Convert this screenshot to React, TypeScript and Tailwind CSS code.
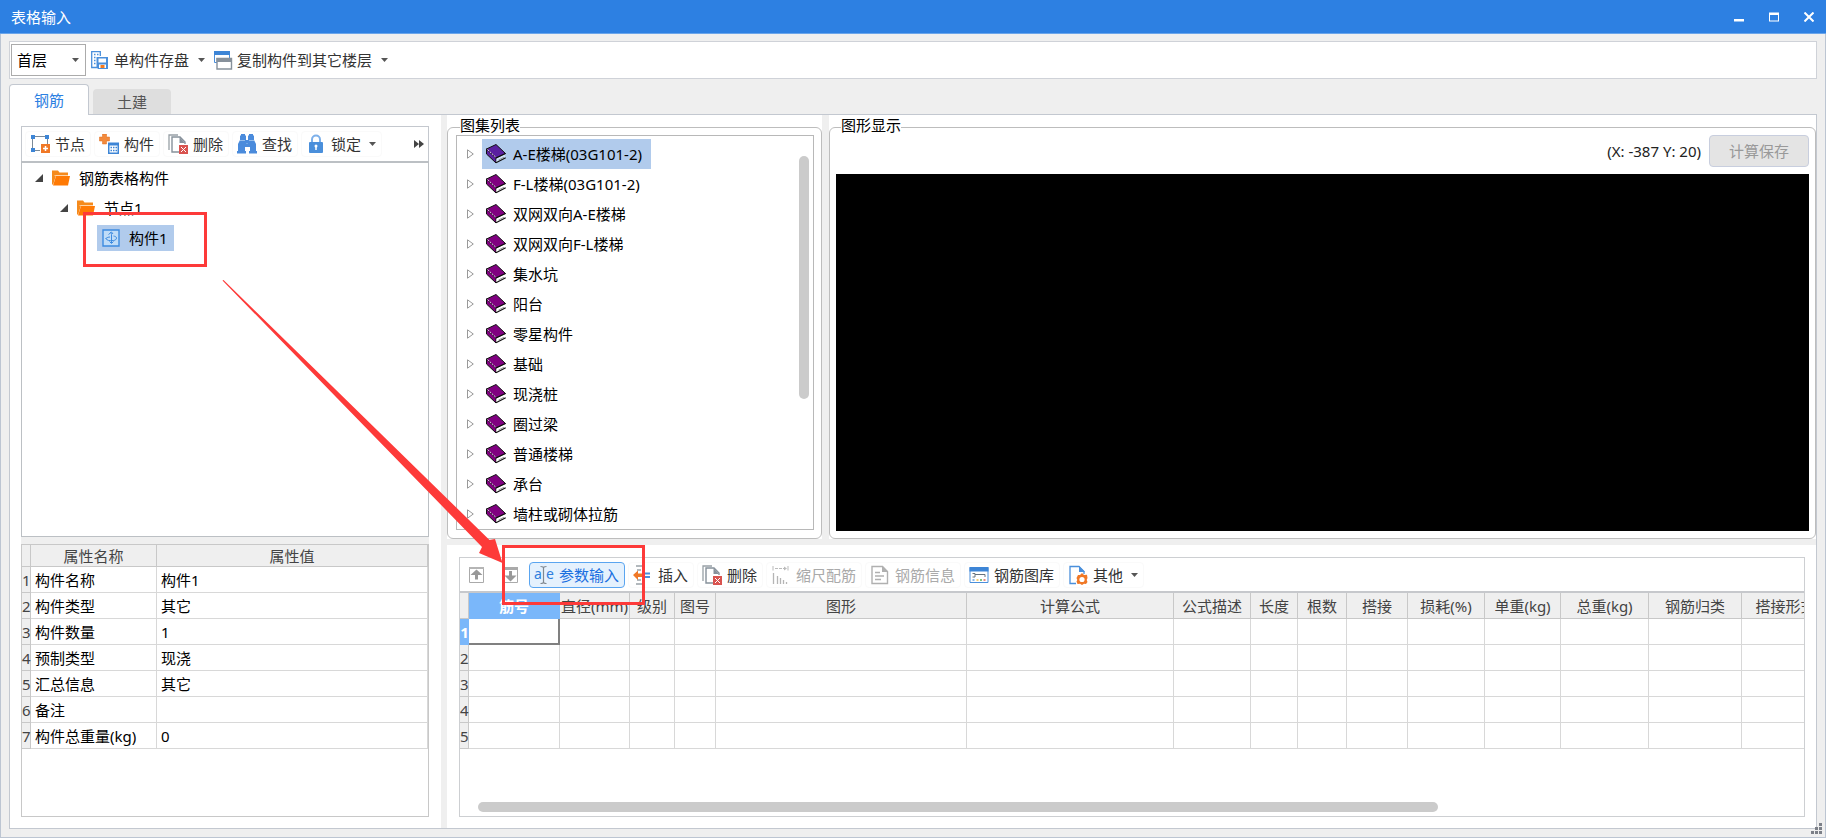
import { ReactNode, useState } from "react";

type IconProps = {
  children: ReactNode;
};

type ToolButtonProps = {
  icon: ReactNode;
  label: string;
  disabled?: boolean;
  active?: boolean;
  dropdown?: boolean;
};

const atlasItems = [
  "A-E楼梯(03G101-2)",
  "F-L楼梯(03G101-2)",
  "双网双向A-E楼梯",
  "双网双向F-L楼梯",
  "集水坑",
  "阳台",
  "零星构件",
  "基础",
  "现浇桩",
  "圈过梁",
  "普通楼梯",
  "承台",
  "墙柱或砌体拉筋",
];

const properties = [
  { name: "构件名称", value: "构件1" },
  { name: "构件类型", value: "其它" },
  { name: "构件数量", value: "1" },
  { name: "预制类型", value: "现浇" },
  { name: "汇总信息", value: "其它" },
  { name: "备注", value: "" },
  { name: "构件总重量(kg)", value: "0" },
];

const columns = [
  { title: "筋号", width: "w-[91px]" },
  { title: "直径(mm)", width: "w-[70px]" },
  { title: "级别", width: "w-[45px]" },
  { title: "图号", width: "w-[41px]" },
  { title: "图形", width: "w-[251px]" },
  { title: "计算公式", width: "w-[207px]" },
  { title: "公式描述", width: "w-[77px]" },
  { title: "长度", width: "w-[47px]" },
  { title: "根数", width: "w-[49px]" },
  { title: "搭接", width: "w-[61px]" },
  { title: "损耗(%)", width: "w-[77px]" },
  { title: "单重(kg)", width: "w-[76px]" },
  { title: "总重(kg)", width: "w-[88px]" },
  { title: "钢筋归类", width: "w-[93px]" },
  { title: "搭接形式", width: "w-[88px]" },
];

function Icon({ children }: IconProps) {
  return (
    <svg
      viewBox="0 0 20 20"
      className="w-5 h-5 shrink-0"
      fill="none"
      aria-hidden="true"
    >
      {children}
    </svg>
  );
}

function Caret() {
  return (
    <svg viewBox="0 0 7 4" className="w-[7px] h-1 shrink-0" aria-hidden="true">
      <path d="M0 0h7L3.5 4z" fill="#555" />
    </svg>
  );
}

const SaveUnitIcon = () => (
  <Icon>
    <path d="M7 17.500H1.700V1.700h8.600V6" stroke="#4a8fdb" strokeWidth="1.300" />
    <path
      d="M4 4.500h1.500M4 7.500h1.500M4 10.500h1.500M4 13.500h1.500M7 4.500h1.500"
      stroke="#4a8fdb"
      strokeWidth="1.300"
    />
    <path d="M6.500 7H18v12H8l-1.500-1.500z" fill="#4a8fdb" />
    <path d="M8.500 8.500h7.500v4H8.500z" fill="#fff" />
    <path d="M9 14.500h7V18H9z" fill="#fff" />
    <path d="M10.500 15h4v3h-4z" fill="#f47b20" />
  </Icon>
);

const CopyFloorIcon = () => (
  <Icon>
    <path d="M1.500 1.500h15v11h-15z" fill="#fff" stroke="#4a8fdb" />
    <path d="M1 1h16v4H1z" fill="#3d85d6" />
    <path
      d="M4 8.500h14.500v10.500H4z"
      fill="#fff"
      stroke="#87919b"
      strokeWidth="1.400"
    />
    <path d="M3.500 8h15.500v4H3.500z" fill="#87919b" />
  </Icon>
);

const NodeIcon = () => (
  <Icon>
    <path d="M3 2.500h13M2.500 3v13M17.500 4v6M4 16.500h6" stroke="#7b8a98" />
    <path d="M1 1h4v4H1zM15 1h4v4h-4zM1 14h4v4H1z" fill="#3d85d6" />
    <path d="M11 10h9v9h-9z" fill="#f07826" />
    <path d="M15.500 12v5M13 14.500h5" stroke="#fff" strokeWidth="1.500" />
  </Icon>
);

const MemberIcon = () => (
  <Icon>
    <path
      d="M3.500 0h4v3H10.500v4H7.500v3h-4V7H.500V3h3z"
      fill="#f28a3c"
      stroke="#e06a1a"
      strokeWidth=".5"
    />
    <path d="M9 8.500h11V20H9z" fill="#3d85d6" />
    <path d="M10.500 11.500h8v7h-8z" fill="#fff" />
    <path
      d="M11.500 13.500h1.500M14 13.500h1.500M16.500 13.500H18M11.500 16.500h1.500M14 16.500h1.500M16.500 16.500H18"
      stroke="#3d85d6"
      strokeWidth="1.500"
    />
  </Icon>
);

const DeleteIcon = () => (
  <Icon>
    <path d="M1 16V1h9" stroke="#98a0a6" strokeWidth="1.300" />
    <path
      d="M12 18H4V3h8l5 5v2"
      fill="#fff"
      stroke="#87919b"
      strokeWidth="1.400"
    />
    <path d="M11.500 3v6H17z" fill="#87919b" />
    <path d="M11 11h9v9h-9z" fill="#d9534f" />
    <path d="M13 13l5 5M18 13l-5 5" stroke="#fff" />
  </Icon>
);

const FindIcon = () => (
  <Icon>
    <path
      d="M4 1.500V0h4v1.500h1V6h2V1.500h1V0h4v1.500h1V6l2 4v7h1v2.500h-8V17h1v-4H8v4h1v2.500H0V17h1v-7l2-4V1.500z"
      fill="#4a8bdc"
    />
    <path d="M3 6.500h5M12 6.500h5M9.500 9.500h1" stroke="#a9cbf0" strokeWidth=".8" />
  </Icon>
);

const LockIcon = () => (
  <Icon>
    <path
      d="M6 9V5.500a4 4 0 0 1 8 0V9"
      stroke="#7db0ea"
      strokeWidth="2"
    />
    <rect x="3" y="8" width="14" height="11" rx="1" fill="#4a8fdb" />
    <circle cx="10" cy="12" r="1.500" fill="#fff" />
    <path d="M10 12v4" stroke="#fff" strokeWidth="1.500" />
  </Icon>
);

const ArrowUpIcon = () => (
  <Icon>
    <path d="M2.500 2.500h14v15h-14z" stroke="#aaa" />
    <path d="M2 2h15v2H2z" fill="#b5b5b5" />
    <path d="M9.500 4.500l6 5.500h-4.500v4.500H8V10H3.500z" fill="#999" />
  </Icon>
);

const ArrowDownIcon = () => (
  <Icon>
    <path d="M2.500 2.500h14v15h-14z" stroke="#aaa" />
    <path d="M2 2h15v3H2z" fill="#aaa" />
    <path d="M9.500 16.500l6-6H11V6H8v4.500H3.500z" fill="#999" />
  </Icon>
);

// letters on both sides of a text cursor
const ParamInputIcon = () => (
  <Icon>
    <text
      x="0"
      y="14"
      fontSize="14"
      fontFamily="Noto Sans, sans-serif"
      fill="#2f7fde"
    >
      a
    </text>
    <text
      x="12"
      y="14"
      fontSize="14"
      fontFamily="Noto Sans, sans-serif"
      fill="#2f7fde"
    >
      e
    </text>
    <path
      d="M6.500 1.500c2 0 3 .5 3 1.500 0-1 1-1.500 3-1.500M9.500 3v14M6.500 18.500c2 0 3-.5 3-1.500 0 1 1 1.500 3 1.500"
      stroke="#808890"
      strokeWidth="1.200"
    />
  </Icon>
);

const InsertIcon = () => (
  <Icon>
    <path d="M3 1h6M4 5h4M4 15h4M3 19h6" stroke="#9aa2a8" strokeWidth="1.300" />
    <path d="M10 8.500h7M10 12h7" stroke="#4a8fdb" strokeWidth="1.800" />
    <path d="M0 10l5-4.500v3h4v3.500H5v3z" fill="#f07826" />
  </Icon>
);

const ScaleIcon = () => (
  <Icon>
    <path d="M2 1v4.500M17 1v4.500" stroke="#bbb" />
    <path d="M4 3.500h10" stroke="#bbb" strokeDasharray="3 1" />
    <path d="M13 1.500l3 2-3 2z" fill="#bbb" />
    <path
      d="M2.500 8v11M6.500 11v8M9.500 13v6M12.500 15v4M15.500 17v2"
      stroke="#b5b5b5"
      strokeWidth="1.300"
    />
  </Icon>
);

const InfoIcon = () => (
  <Icon>
    <path d="M2 1.500h10.500l5 5v12H2z" stroke="#b0b0b0" strokeWidth="1.400" />
    <path d="M12 1v6h6z" fill="#b0b0b0" />
    <path d="M5 7.500h5M5 11h9M5 14.500h6" stroke="#b0b0b0" strokeWidth="1.300" />
  </Icon>
);

const LibraryIcon = () => (
  <Icon>
    <path d="M1 2.500h18v15H1z" fill="#fff" stroke="#4a8fdb" />
    <path d="M.5 2h19v4.500H.5z" fill="#3d85d6" />
    <path d="M3.500 8.500h2.500v3.500H3.500M6 9.500h10V12" stroke="#66727c" />
    <path d="M3.500 15h2" stroke="#4a8fdb" strokeWidth="1.300" />
    <path d="M7.500 15h2" stroke="#f0b020" strokeWidth="1.300" />
    <path d="M11 15h2" stroke="#54b154" strokeWidth="1.300" />
    <path d="M14.500 15h2" stroke="#e0453a" strokeWidth="1.300" />
  </Icon>
);

const OtherIcon = () => (
  <Icon>
    <path
      d="M8 18.500H2v-17h9l5 5V9"
      fill="#fff"
      stroke="#4a8fdb"
      strokeWidth="1.300"
    />
    <path d="M11 1v6h6z" fill="#4a8fdb" />
    <path
      d="M14 8l2 2 3-.3.500 3.300-.8 2 .8 2-1.500 2-2-.3-2 1.300-2-1.300-2.500.3-1-2.500.8-1.500-.8-2 1.500-3h2z"
      fill="#f07826"
    />
    <circle cx="14" cy="14.500" r="2.600" fill="#fff" />
  </Icon>
);

const FolderIcon = () => (
  <svg viewBox="0 0 18 16" className="w-[18px] h-4 shrink-0" aria-hidden="true">
    <path d="M0 14V.500h6l1.500 2H16v3H4L1 15z" fill="#f58a1c" />
    <path d="M4 6h14l-2 9.500H1z" fill="#ff7a05" />
    <path d="M2.500 5.500H16" stroke="#ffd9b0" strokeWidth=".8" />
  </svg>
);

const UnitIcon = () => (
  <svg
    viewBox="0 0 18 18"
    className="w-[18px] h-[18px] shrink-0"
    fill="none"
    stroke="#3d8be0"
    aria-hidden="true"
  >
    <path d="M1 1h16v16H1z" fill="#bfdcf8" strokeWidth="1.400" />
    <path d="M9.500 14V5.500c0-1.500-.5-2-1.500-2M6.500 5.500L9.500 3l1.500 2M4 9.500c1-1 2.500-1.500 4-1.500M3.500 9c1 2.500 4 3 8 2.500 2-.3 3-1.200 3-2.500s-1.500-1.700-3-2M7.500 12.500l2 2 2-2" />
  </svg>
);

const BookIcon = ({ selected }: { selected: boolean }) => (
  <Icon>
    <path
      d="M.500 5L10 .500 19.500 9.500 10 14z"
      fill={selected ? "#5a1fa0" : "#800080"}
      stroke="#101010"
    />
    <path
      d="M.500 5v5l9.500 9V14z"
      fill={selected ? "#5a1fa0" : "#800080"}
      stroke="#101010"
    />
    <path
      d="M10.500 14.500l9-4.500-.8 2 .8 1.500-9 5z"
      fill={selected ? "#cfe3f7" : "#fff"}
    />
    <path d="M10 14l9.500-4.500M10 18.800l9.700-5" stroke="#101010" strokeWidth="1.200" />
    <path d="M12.500 16l5.500-2.800" stroke="#777" strokeWidth=".7" />
    <path d="M1.500 5.500L10 13.500" stroke="#e8d8f0" strokeDasharray="2 1" />
  </Icon>
);

function ToolButton(props: ToolButtonProps) {
  const state = props.active
    ? "border-[#5aa5f0] bg-[#e5f1fd] text-[#1a6fe0]"
    : props.disabled
      ? "border-[#fafafa] text-[#aaa]"
      : "border-[#fafafa] text-[#333]";

  return (
    <button
      type="button"
      disabled={props.disabled}
      className={`flex items-center gap-[5px] h-[26px] pl-1 pr-[5px] border rounded whitespace-nowrap ${state}`}
    >
      {props.icon}
      {props.label}
      {props.dropdown && (
        <span className="pl-[3px]">
          <Caret />
        </span>
      )}
    </button>
  );
}

function TreeToggle() {
  return (
    <button type="button" aria-label="折叠" className="shrink-0">
      <svg viewBox="0 0 8 8" className="w-2 h-2" aria-hidden="true">
        <path d="M8 0v8H0z" fill="#444" />
      </svg>
    </button>
  );
}

function TitleBar() {
  return (
    <header className="flex items-center h-[34px] pl-[11px] bg-[#2d80e2] border-b border-[#6aa5ea] text-white">
      <h1 className="flex-1">表格输入</h1>
      <button
        type="button"
        aria-label="最小化"
        className="w-[35px] flex justify-center"
      >
        <svg viewBox="0 0 10 10" className="w-2.5 h-2.5" aria-hidden="true">
          <path d="M0 7h10v2.500H0z" fill="#fff" />
        </svg>
      </button>
      <button
        type="button"
        aria-label="最大化"
        className="w-[35px] flex justify-center"
      >
        <svg viewBox="0 0 10 10" className="w-2.5 h-2.5" aria-hidden="true">
          <path d="M0 .500h10v9H0zM1 3v5.500h8V3z" fill="#fff" fillRule="evenodd" />
        </svg>
      </button>
      <button
        type="button"
        aria-label="关闭"
        className="w-[35px] flex justify-center"
      >
        <svg viewBox="0 0 10 10" className="w-2.5 h-2.5" aria-hidden="true">
          <path d="M.5 .5l9 9M9.500 .5l-9 9" stroke="#fff" strokeWidth="2" />
        </svg>
      </button>
    </header>
  );
}

function MainToolbar() {
  return (
    <div className="flex items-center h-[38px] px-px bg-white border border-[#cfd2d8]">
      <div className="relative">
        <select
          aria-label="楼层"
          className="appearance-none w-[75px] h-8 pl-[5px] bg-white border border-[#ababab] text-black"
        >
          <option>首层</option>
        </select>
        <span className="absolute right-[7px] top-1/2 -translate-y-1/2 pointer-events-none">
          <Caret />
        </span>
      </div>
      <button type="button" className="flex items-center pl-1 text-[#333]">
        <SaveUnitIcon />
        <span className="pl-1 pr-[9px]">单构件存盘</span>
        <Caret />
      </button>
      <button type="button" className="flex items-center pl-2 text-[#333]">
        <CopyFloorIcon />
        <span className="pl-1 pr-[9px]">复制构件到其它楼层</span>
        <Caret />
      </button>
    </div>
  );
}

function MemberPanel() {
  return (
    <div className="flex flex-col w-[431px] shrink-0 p-[11px] pr-3">
      <div className="flex items-center gap-[3px] h-[35px] pl-[3px] pr-1 border border-b-0 border-[#c4c8ce]">
        <ToolButton icon={<NodeIcon />} label="节点" />
        <ToolButton icon={<MemberIcon />} label="构件" />
        <ToolButton icon={<DeleteIcon />} label="删除" />
        <ToolButton icon={<FindIcon />} label="查找" />
        <ToolButton icon={<LockIcon />} label="锁定" dropdown />
        <button type="button" aria-label="更多" className="ml-auto">
          <svg viewBox="0 0 10 8" className="w-2.5 h-2" aria-hidden="true">
            <path d="M0 0l5 4-5 4zM5 0l5 4-5 4z" fill="#444" />
          </svg>
        </button>
      </div>
      <ul className="flex-1 border border-t-2 border-[#bcc0c4] text-black">
        <li className="flex items-center h-[30px] pl-[13px]">
          <TreeToggle />
          <span className="pl-[9px] pr-[9px]">
            <FolderIcon />
          </span>
          钢筋表格构件
        </li>
        <li className="flex items-center h-[30px] pl-[38px]">
          <TreeToggle />
          <span className="pl-[9px] pr-[9px]">
            <FolderIcon />
          </span>
          节点1
        </li>
        <li className="flex items-center h-[30px] pl-[75px]">
          <span className="flex items-center gap-[9px] h-[26px] pl-[5px] pr-1.5 bg-[#b1cbec]">
            <UnitIcon />
            构件1
          </span>
        </li>
      </ul>
      <div className="h-[7px] bg-[#efefef]" />
      <div className="pb-[67px] border border-[#c8c8c8]">
        <table className="w-full table-fixed border-separate border-spacing-0 text-left">
          <colgroup>
            <col className="w-[9px]" />
            <col className="w-[126px]" />
            <col />
          </colgroup>
          <thead>
            <tr className="h-[22px] bg-[#efefef] text-center text-[#444]">
              <td className="p-0 border-r border-b border-[#c8c8c8]" />
              <th className="p-0 font-normal border-r border-b border-[#c8c8c8]">
                属性名称
              </th>
              <th className="p-0 font-normal border-r border-b border-[#c8c8c8]">
                属性值
              </th>
            </tr>
          </thead>
          <tbody>
            {properties.map((property, i) => (
              <tr key={property.name} className="h-[26px] text-black">
                <th className="p-0 font-normal bg-[#efefef] border-r border-b border-[#c8c8c8] text-[#444]">
                  {i + 1}
                </th>
                <td className="p-0 pl-1 border-r border-b border-[#d8d8d8]">
                  {property.name}
                </td>
                <td className="p-0 pl-1 border-r border-b border-[#d8d8d8]">
                  {property.value}
                </td>
              </tr>
            ))}
          </tbody>
        </table>
      </div>
    </div>
  );
}

function AtlasList() {
  const [selected, setSelected] = useState(atlasItems[0]);

  return (
    <fieldset className="w-[375px] shrink-0 min-w-0 pl-2 pr-[7px] pb-2 border border-[#bdbdbd] rounded-md">
      <legend className="h-4 ml-1 leading-3 text-black">图集列表</legend>
      <div className="flex pt-[3px] border border-[#b8b8b8]">
        <ul className="flex-1">
          {atlasItems.map((item) => (
            <li key={item} className="flex items-center h-[30px] pl-2.5">
              <button type="button" aria-label="展开">
                <svg
                  viewBox="0 0 7 10"
                  className="w-[7px] h-2.5"
                  aria-hidden="true"
                >
                  <path d="M.5 .8v8.400L6.300 5z" fill="#fff" stroke="#999" />
                </svg>
              </button>
              <button
                type="button"
                onClick={() => setSelected(item)}
                className={
                  item === selected
                    ? "flex items-center gap-[7px] h-[30px] ml-2 pl-1 pr-[9px] bg-[#b1cbec] text-black"
                    : "flex items-center gap-[7px] h-[30px] ml-2 pl-1 pr-[9px] text-black"
                }
              >
                <BookIcon selected={item === selected} />
                {item}
              </button>
            </li>
          ))}
        </ul>
        <div className="w-2.5 h-[243px] mt-[17px] mr-1 rounded-full bg-[#cbcbcb]" />
      </div>
    </fieldset>
  );
}

function GraphicView() {
  return (
    <fieldset className="flex flex-col flex-1 min-w-0 px-1.5 pb-[7px] border border-[#bdbdbd] rounded-md">
      <legend className="h-4 ml-[5px] leading-3 text-black">图形显示</legend>
      <div className="flex items-center justify-end gap-2 pb-[7px] text-[#222]">
        (X: -387 Y: 20)
        <button
          type="button"
          disabled
          className="w-[100px] h-8 bg-[#e4e4e4] border border-[#c8cede] rounded text-[#999]"
        >
          计算保存
        </button>
      </div>
      <div className="flex-1 bg-black" />
    </fieldset>
  );
}

function RebarTable() {
  return (
    <div className="flex flex-col flex-1 min-w-0 overflow-hidden border border-[#cdcfd2]">
      <div className="flex items-center gap-[3px] h-[35px] pl-px border-b-2 border-[#c6c8cc]">
        <button
          type="button"
          aria-label="上移"
          disabled
          className="flex items-center justify-center w-[31px]"
        >
          <ArrowUpIcon />
        </button>
        <button
          type="button"
          aria-label="下移"
          disabled
          className="flex items-center justify-center w-[31px]"
        >
          <ArrowDownIcon />
        </button>
        <ToolButton icon={<ParamInputIcon />} label="参数输入" active />
        <ToolButton icon={<InsertIcon />} label="插入" />
        <ToolButton icon={<DeleteIcon />} label="删除" />
        <ToolButton icon={<ScaleIcon />} label="缩尺配筋" disabled />
        <ToolButton icon={<InfoIcon />} label="钢筋信息" disabled />
        <ToolButton icon={<LibraryIcon />} label="钢筋图库" />
        <ToolButton icon={<OtherIcon />} label="其他" dropdown />
      </div>
      <table className="w-[1370px] table-fixed border-separate border-spacing-0">
        <colgroup>
          <col className="w-[9px]" />
          {columns.map((column) => (
            <col key={column.title} className={column.width} />
          ))}
        </colgroup>
        <thead>
          <tr className="h-[26px] bg-[#efefef] text-[#444]">
            <td className="p-0 border-r border-b border-[#c8c8c8]" />
            {columns.map((column, i) => (
              <th
                key={column.title}
                className={
                  i === 0
                    ? "p-0 bg-[#7ab7fa] border-r border-b border-[#7ab7fa] text-white font-bold"
                    : "p-0 border-r border-b border-[#c8c8c8] font-normal whitespace-nowrap"
                }
              >
                {column.title}
              </th>
            ))}
          </tr>
        </thead>
        <tbody>
          {[1, 2, 3, 4, 5].map((row) => (
            <tr key={row} className="h-[26px]">
              <th
                className={
                  row === 1
                    ? "p-0 bg-[#7ab7fa] border-b border-[#7ab7fa] text-white font-bold"
                    : "p-0 bg-[#efefef] border-r border-b border-[#c8c8c8] text-[#444] font-normal"
                }
              >
                {row}
              </th>
              {columns.map((column, i) => (
                <td
                  key={column.title}
                  className={
                    row === 1 && i === 0
                      ? "p-0 border-r-2 border-b-2 border-[#808080]"
                      : "p-0 border-r border-b border-[#d8d8d8]"
                  }
                />
              ))}
            </tr>
          ))}
        </tbody>
      </table>
      <div className="w-5/7 h-2.5 mt-auto mb-1 ml-[18px] rounded-full bg-[#cbcbcb]" />
    </div>
  );
}

// red marks that lead from the tree node to the input button
function Annotation() {
  return (
    <svg
      className="absolute left-0 top-0 w-[660px] h-[620px] pointer-events-none"
      viewBox="0 0 660 620"
      fill="none"
      aria-hidden="true"
    >
      <rect
        x="84.5"
        y="213.5"
        width="121"
        height="52"
        stroke="#fd3a39"
        strokeWidth="3"
      />
      <rect
        x="503.5"
        y="546.5"
        width="140"
        height="57"
        stroke="#fd3a39"
        strokeWidth="3"
      />
      <path
        d="M222.500 280.500L223.500 280 489.500 540l5.500-1 7.500 24-23.500-10 3-6z"
        fill="#fd3a39"
      />
    </svg>
  );
}

export default function App() {
  const [tab, setTab] = useState("钢筋");

  return (
    <div className="relative flex flex-col min-h-screen bg-[#efefef] font-['Noto_Sans','Noto_Sans_CJK_SC',sans-serif] text-[15px] leading-5">
      <TitleBar />
      <main className="flex flex-col flex-1 px-2 pt-[7px] pb-2 border border-t-0 border-[#bcc5d2]">
        <MainToolbar />
        <div role="tablist" className="flex items-end gap-1 pt-[5px]">
          {["钢筋", "土建"].map((name) => (
            <button
              key={name}
              type="button"
              role="tab"
              aria-selected={tab === name}
              onClick={() => setTab(name)}
              className={
                tab === name
                  ? "relative w-20 h-[31px] -mb-px bg-white border border-b-0 border-[#c3c8d0] rounded-t text-[#2d80e2]"
                  : "w-[78px] h-[25px] bg-[#dedede] rounded-t text-[#555]"
              }
            >
              {name}
            </button>
          ))}
        </div>
        <div className="flex flex-1 bg-white border border-[#c3c8d0]">
          <MemberPanel />
          <div className="w-1.5 shrink-0 bg-[#efefef]" />
          <div className="flex flex-col flex-1 min-w-0">
            <div className="flex">
              <div className="flex pt-1">
                <AtlasList />
              </div>
              <div className="w-[7px] shrink-0 bg-[#efefef]" />
              <div className="flex flex-1 min-w-0 pt-1">
                <GraphicView />
              </div>
            </div>
            <div className="h-1.5 bg-[#efefef]" />
            <div className="flex flex-1 min-w-0 p-[11px] pl-3 pt-3">
              <RebarTable />
            </div>
          </div>
        </div>
      </main>
      <svg
        viewBox="0 0 11 11"
        className="absolute right-1 bottom-1 w-[11px] h-[11px]"
        aria-hidden="true"
      >
        <path
          d="M8 0h3v3H8zM4 4h3v3H4zM8 4h3v3H8zM0 8h3v3H0zM4 8h3v3H4zM8 8h3v3H8z"
          fill="#7c8088"
        />
      </svg>
      <Annotation />
    </div>
  );
}
